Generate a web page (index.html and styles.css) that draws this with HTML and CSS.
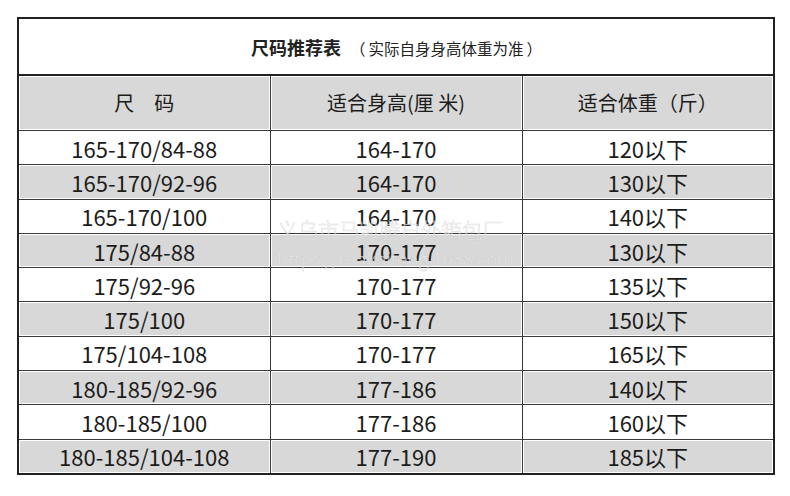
FILE: index.html
```html
<!DOCTYPE html>
<html lang="zh-CN">
<head>
<meta charset="utf-8">
<title>尺码推荐表</title>
<link rel="stylesheet" href="styles.css">
</head>
<body>
<div class="sheet">
  <table class="size-table">
    <colgroup>
      <col class="c1"><col class="c2"><col class="c3">
    </colgroup>
    <tr class="title-row">
      <td colspan="3"><span class="title">尺码推荐表</span><span class="sub"><span class="paren">（</span>实际自身身高体重为准<span class="paren">）</span></span></td>
    </tr>
    <tr class="head-row gray">
      <td>尺　码</td><td>适合身高(厘 米)</td><td>适合体重（斤）</td>
    </tr>
    <tr><td>165-170/84-88</td><td>164-170</td><td>120以下</td></tr>
    <tr class="gray"><td>165-170/92-96</td><td>164-170</td><td>130以下</td></tr>
    <tr><td>165-170/100</td><td>164-170</td><td>140以下</td></tr>
    <tr class="gray"><td>175/84-88</td><td>170-177</td><td>130以下</td></tr>
    <tr><td>175/92-96</td><td>170-177</td><td>135以下</td></tr>
    <tr class="gray"><td>175/100</td><td>170-177</td><td>150以下</td></tr>
    <tr><td>175/104-108</td><td>170-177</td><td>165以下</td></tr>
    <tr class="gray"><td>180-185/92-96</td><td>177-186</td><td>140以下</td></tr>
    <tr><td>180-185/100</td><td>177-186</td><td>160以下</td></tr>
    <tr class="gray"><td>180-185/104-108</td><td>177-190</td><td>185以下</td></tr>
  </table>
  <div class="watermark">
    <div class="wm1">义乌市马凯腾户外箱包厂</div>
    <div class="wm2">https://makaiteng.1688.com</div>
  </div>
</div>
</body>
</html>
```
FILE: styles.css
```css
html, body {
  margin: 0;
  padding: 0;
  background: #fff;
}
body {
  font-family: "Noto Sans CJK SC", "Noto Sans", sans-serif;
  color: #1c1c1c;
}
.sheet {
  position: relative;
  padding: 17px 17px 0 17px;
  width: 756px;
}
.size-table {
  width: 756px;
  table-layout: fixed;
  border-collapse: collapse;
  border: 2px solid #222;
}
.c1 { width: 252px; }
.c2 { width: 252px; }
.c3 { width: 252px; }
.size-table td {
  border: 1px solid #3a3a3a;
  text-align: center;
  vertical-align: middle;
  padding: 0;
  height: 33.3px;
  font-size: 22px;
  line-height: 24px;
}
.title-row td {
  height: 55px;
  border-bottom: 2px solid #222;
  padding-left: 4px;
}
.title {
  font-size: 18px;
  font-weight: bold;
  color: #222;
}
.sub {
  font-size: 15.5px;
  color: #222;
  margin-left: 6px;
}
.paren {
  display: inline-block;
  margin: 0 3px;
}
.head-row td {
  height: 54px;
  font-size: 20px;
}
.gray td {
  background: #d8d8d8;
  box-shadow: inset 0 0 0 1px #fff;
}
.watermark {
  position: absolute;
  left: 277px;
  top: 215px;
  color: rgba(255, 255, 255, 0.6);
  -webkit-text-stroke: 0.5px rgba(185, 185, 185, 0.5);
  font-family: "Noto Sans CJK SC", sans-serif;
  font-weight: 300;
  pointer-events: none;
}
.wm1 {
  font-size: 21px;
  letter-spacing: -0.5px;
  line-height: 28px;
}
.wm2 {
  font-size: 19px;
  line-height: 22px;
  margin-top: 4px;
  letter-spacing: -0.2px;
}
```
